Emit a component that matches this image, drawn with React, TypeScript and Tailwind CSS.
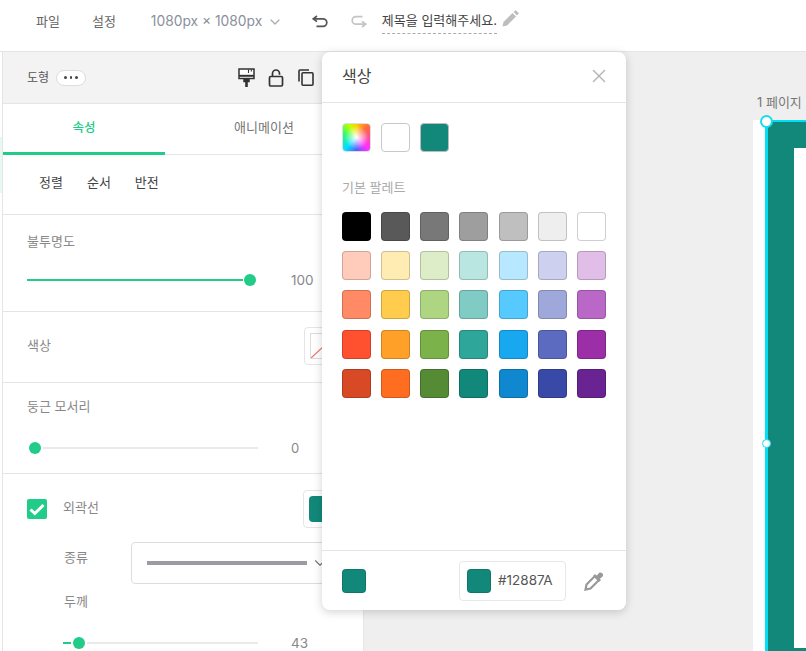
import React from "react";
import { ChevronDown, X } from "lucide-react";

const palette = [
  "#000000","#595959","#787878","#9e9e9e","#bfbfbf","#eeeeee","#ffffff",
  "#ffccbc","#ffecb3","#dcedc8","#b9e6e0","#b8e8ff","#cdd1ef","#e1bee7",
  "#ff8a65","#ffcc4d","#aed581","#80cbc4","#56caff","#9fa8da","#ba68c8",
  "#ff5130","#ffa028","#7cb24a","#2ea699","#18a8f0","#5c6bc0","#9c2ea8",
  "#d84a26","#ff6d20","#558b35","#12887a","#1088d0","#3949a8","#6a2392",
];

function Undo({ color }: { color: string }) {
  return (
    <svg width="16" height="13" viewBox="0 0 16 13" fill="none" stroke={color} strokeWidth="1.700">
      <path d="M5 1 1.300 3.800 5 6.600" />
      <path d="M1.800 3.800H11a3.800 3.800 0 0 1 0 7.600H4.500" />
    </svg>
  );
}

export default function App() {
  return (
    <div className="relative h-[651px] w-[806px] overflow-hidden bg-[#efefef] font-['Inter','Noto_Sans_CJK_KR',sans-serif] text-[13px] text-[#555]">
      {/* top bar */}
      <header className="flex h-[52px] items-center border-b border-[#e5e5e5] bg-white pb-[8px]">
        <span className="ml-[36px] text-[#666]">파일</span>
        <span className="ml-[32px] text-[#666]">설정</span>
        <span className="ml-[35px] w-[111px] whitespace-nowrap text-[13.800px] text-[#8a8f9c]">1080px × 1080px</span>
        <ChevronDown className="ml-[5px] size-[16px] text-[#aaa]" strokeWidth={1.800} />
        <span className="ml-[29px] flex"><Undo color="#555" /></span>
        <span className="ml-[23px] flex rotate-180"><Undo color="#c4c4c4" /></span>
        <span className="ml-[15px] w-[115px] whitespace-nowrap border-b border-dashed border-[#aaa] pb-[2px] pt-[2px] text-[#444]">제목을 입력해주세요.</span>
        <svg className="ml-[4px] mb-[5px]" width="18" height="18" viewBox="0 0 18 18" fill="#bdbdbd">
          <path d="M1.500 16.500l1-4.500L11.500 3l3.500 3.500-9 9z" />
          <path d="M12.600 2l1.400-1.300a1 1 0 0 1 1.400 0l2 2a1 1 0 0 1 0 1.400L16 5.400z" />
        </svg>
      </header>

      <div className="flex h-[599px]">
        {/* left edge */}
        <div className="relative w-[3px] shrink-0 border-r border-[#e5e5e5] bg-white">
          <div className="absolute left-0 top-[85px] h-[56px] w-[2px] bg-[#e6f8f0]" />
        </div>

        {/* side panel */}
        <aside className="w-[361px] shrink-0 border-r border-[#e5e5e5] bg-white">
          <div className="flex h-[52px] items-center border-b border-[#e5e5e5] bg-[#f3f3f3] pl-[24px] text-[#555]">
            <span className="text-[12px]">도형</span>
            <span className="ml-[7px] flex h-[16px] w-[30px] items-center justify-center gap-[3px] rounded-full border border-[#ddd] bg-white">
              <i className="size-[2.500px] rounded-full bg-[#444]" />
              <i className="size-[2.500px] rounded-full bg-[#444]" />
              <i className="size-[2.500px] rounded-full bg-[#444]" />
            </span>
            <svg className="ml-[152px]" width="17" height="20" viewBox="0 0 17 20" fill="none" stroke="#333" strokeWidth="1.500">
              <path d="M1 1h15v9.500H1z" fill="#fff" />
              <path d="M1 7.800h15" strokeWidth="2" />
              <path d="M6 11h5v2.500H6z" fill="#333" />
              <path d="M8.500 13v6" strokeWidth="2.600" />
              <path d="M10.500 1.500v3.500M13.300 1.500v2" strokeWidth="1.100" />
            </svg>
            <svg className="ml-[13px]" width="16" height="18" viewBox="0 0 16 18" fill="none" stroke="#333" strokeWidth="1.700">
              <rect x="1.500" y="7.500" width="13" height="9.500" rx="1.200" />
              <path d="M4.500 7.500V4.500a3.500 3.500 0 0 1 7 0v1.200" />
            </svg>
            <svg className="ml-[14px]" width="16" height="17" viewBox="0 0 16 17" fill="none" stroke="#333" strokeWidth="1.600">
              <path d="M11 1H2a1 1 0 0 0-1 1v10.500" />
              <rect x="4" y="3.800" width="11" height="12.400" rx="1" />
            </svg>
          </div>

          <div className="flex h-[51px] border-b border-[#e5e5e5]">
            <div className="-mb-px flex w-[162px] items-center justify-center border-b-[3px] border-[#21cc88] text-[12.500px] font-medium text-[#21cc88]">속성</div>
            <div className="flex w-[198px] items-center justify-center pb-[2px] text-[#777]">애니메이션</div>
          </div>

          <div className="flex h-[60px] items-center gap-[24px] border-b border-[#e5e5e5] pb-[3px] pl-[36px] text-[#444]">
            <span>정렬</span><span>순서</span><span>반전</span>
          </div>

          <section className="h-[97px] border-b border-[#e5e5e5] pl-[24px] pt-[17px]">
            <div className="text-[#888]">불투명도</div>
            <div className="mt-[18px] flex items-center">
              <div className="relative flex h-3 w-[231px] items-center">
                <div className="h-[2px] w-[216px] bg-[#21cc88]" />
                <div className="absolute left-[217px] top-0 size-3 rounded-full bg-[#21cc88]" />
              </div>
              <span className="ml-[33px] text-[13.500px] text-[#888]">100</span>
            </div>
          </section>

          <section className="flex h-[71px] items-center border-b border-[#e5e5e5] pb-[2px] pl-[24px]">
            <span className="text-[#888]">색상</span>
            <div className="ml-[253px] h-[38px] w-[40px] overflow-hidden rounded-[4px] border border-[#e5e5e5] p-[5px]">
              <svg className="border border-[#ddd]" width="28" height="26" viewBox="0 0 28 26"><path d="M0 26 28 0" stroke="#f26a6a" strokeWidth="1.200" /></svg>
            </div>
          </section>

          <section className="h-[91px] border-b border-[#e5e5e5] pl-[24px] pt-[14px]">
            <div className="text-[#888]">둥근 모서리</div>
            <div className="mt-[22px] flex items-center">
              <div className="relative flex h-3 w-[231px] items-center justify-end">
                <div className="h-[2px] w-[215px] bg-[#eaeaea]" />
                <div className="absolute left-[2px] top-0 size-3 rounded-full bg-[#21cc88]" />
              </div>
              <span className="ml-[33px] text-[#888]">0</span>
            </div>
          </section>

          <section className="pl-[24px] pt-[16px]">
            <div className="flex h-[38px] items-center">
              <span className="flex size-[20px] items-center justify-center rounded-[2px] bg-[#21cc88]">
                <svg width="16" height="13" viewBox="0 0 16 13" fill="none" stroke="#fff" strokeWidth="3"><path d="M1.500 6.500l4.300 4L14.500 2" /></svg>
              </span>
              <span className="ml-[16px] pb-[2px] text-[#888]">외곽선</span>
              <div className="ml-[204px] h-[38px] w-[40px] rounded-[4px] border border-[#e5e5e5] p-[5px]">
                <div className="h-[26px] w-[26px] rounded-[4px] bg-[#12887a]" />
              </div>
            </div>
            <div className="mt-[14px] flex items-start pl-[37px]">
              <span className="pt-[6px] text-[#888]">종류</span>
              <div className="ml-[43px] flex h-[42px] w-[210px] items-center rounded-[4px] border border-[#ddd] pl-[15px]">
                <div className="h-[4px] w-[160px] bg-[#9b9ba3]" />
                <ChevronDown className="ml-[4px] size-[18px] text-[#777]" strokeWidth={1.500} />
              </div>
            </div>
            <div className="mt-[8px] pl-[37px] text-[#888]">두께</div>
            <div className="mt-[21px] flex items-center pl-[36px]">
              <div className="relative flex h-3 w-[195px] items-center justify-end">
                <div className="absolute left-0 h-[2px] w-[8px] bg-[#21cc88]" />
                <div className="h-[2px] w-[171px] bg-[#eaeaea]" />
                <div className="absolute left-[10px] top-0 size-3 rounded-full bg-[#21cc88]" />
              </div>
              <span className="ml-[33px] text-[13.500px] text-[#888]">43</span>
            </div>
          </section>
        </aside>

        {/* canvas */}
        <main className="relative flex-1 bg-[#efefef]">
          <span className="absolute left-[393px] top-[41px] whitespace-nowrap text-[13px] text-[#777]">1 페이지</span>
          <div className="absolute left-[389px] top-[68px] h-[560px] w-[60px] bg-white">
            <div className="absolute left-[12px] top-0 h-full w-[60px] border-l-[3px] border-t-[2px] border-[#00dff5] bg-[#12887a]">
              <div className="absolute left-[26px] top-[26px] h-[500px] w-[40px] bg-white" />
            </div>
          </div>
          <div className="absolute left-[396px] top-[63px] size-[13px] rounded-full border-2 border-[#19dcf0] bg-white" />
          <div className="absolute left-[398px] top-[387px] size-[9px] rounded-full border border-[#19dcf0] bg-white" />
        </main>
      </div>

      {/* colour popover */}
      <div className="absolute left-[322px] top-[52px] flex h-[558px] w-[304px] flex-col rounded-[8px] bg-white shadow-[0_2px_10px_rgba(0,0,0,0.18)]">
        <div className="flex h-[51px] items-center justify-between border-b border-[#e5e5e5] pb-[2px] pl-[20px] pr-[16px]">
          <span className="text-[16px] text-[#444]">색상</span>
          <X className="size-[22px] text-[#b5b5b5]" strokeWidth={1.500} />
        </div>
        <div className="flex-1 px-[20px] pt-[20px]">
          <div className="flex gap-[10px]">
            <div className="size-[29px] rounded-[4px] border border-[#ddd] bg-[radial-gradient(circle,#ffffff_0%,#ffffff00_62%),conic-gradient(#ffd000_0deg,#ff6a3d_45deg,#ff30ff_135deg,#5060ff_180deg,#00e0ff_225deg,#30ff60_290deg,#c0ff00_330deg,#ffd000_360deg)]" />
            <div className="size-[29px] rounded-[4px] border border-[#c8c8c8] bg-white" />
            <div className="size-[29px] rounded-[4px] border border-[#bbb] bg-[#12887a]" />
          </div>
          <div className="mt-[25px] text-[13px] leading-[20px] text-[#aaa]">기본 팔레트</div>
          <div className="mt-[15px] grid w-[264px] grid-cols-7 gap-x-[10.170px] gap-y-[10.200px]">
            {palette.map((c) => (
              <div key={c} className="size-[29px] rounded-[4px] border border-[#00000030]" style={{ backgroundColor: c }} />
            ))}
          </div>
        </div>
        <div className="flex h-[60px] items-center border-t border-[#e5e5e5] pl-[20px]">
          <div className="size-[24px] rounded-[4px] border border-[#00000020] bg-[#12887a]" />
          <div className="ml-[93px] flex h-[40px] w-[107px] items-center rounded-[4px] border border-[#e8e8e8] pl-[7px]">
            <div className="size-[24px] rounded-[4px] border border-[#00000020] bg-[#12887a]" />
            <span className="ml-[7px] text-[13.500px] text-[#555]">#12887A</span>
          </div>
          <svg className="ml-[18px]" width="20" height="20" viewBox="0 0 20 20" fill="none" stroke="#999" strokeWidth="2.200">
            <path d="M11 5 2.500 13.500 1.500 18.500l5-1L15 9" />
            <path d="M10 4l6 6" strokeWidth="2.800" />
            <path d="M12.500 6.500 16 2.500a1.800 1.800 0 0 1 2 2l-4 3.500z" fill="#999" />
          </svg>
        </div>
      </div>
    </div>
  );
}
